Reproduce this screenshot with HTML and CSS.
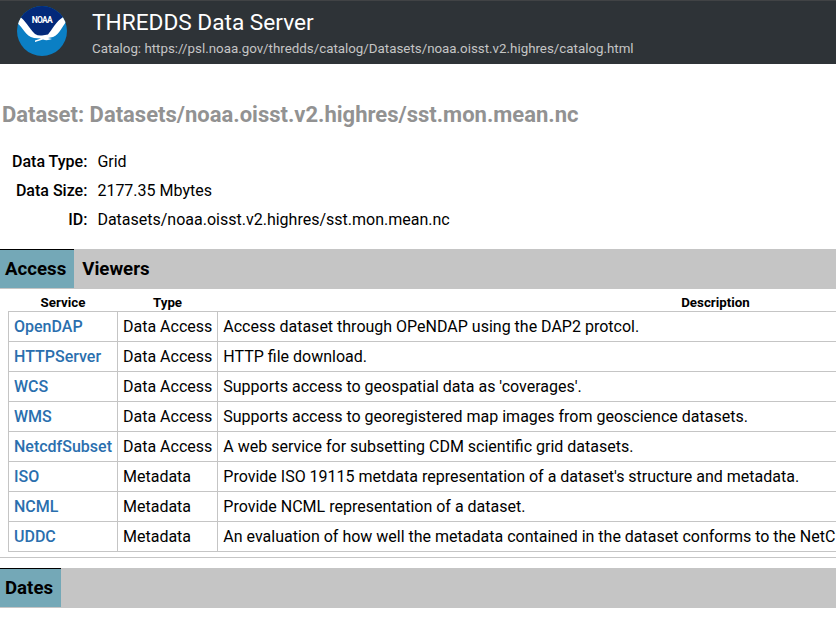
FILE: index.html
```html
<!DOCTYPE html>
<html lang="en">
<head>
<meta charset="utf-8">
<title>THREDDS Data Server</title>
<link rel="stylesheet" href="styles.css">
</head>
<body>
<header class="site-header">
  <svg class="logo" viewBox="0 0 50 50" aria-hidden="true">
    <defs><clipPath id="disc"><circle cx="25" cy="25" r="25"/></clipPath></defs>
    <g clip-path="url(#disc)">
      <rect width="50" height="50" fill="#0b7fc4"/>
      <path d="M0 0H50V11H46L34 29L26 31L18 29L3 11H0Z" fill="#03297a"/>
      <path d="M2.500 10.500C8 14 12 22 18 28Q21 30 25 29.500L31 28.500C35 24 39 15 47 10.500L50 15C45 20 43 28 36 31L31 32L35 33Q30 35 26 33.500L18 36L18 34.500L24 32.500L17 32C8 30 6 21 0 17Z" fill="#fff"/>
    </g>
    <text class="logo-text" x="25.200" y="16.500" text-anchor="middle" textLength="21" lengthAdjust="spacing">NOAA</text>
  </svg>
  <div class="titles">
    <div class="server-name">THREDDS Data Server</div>
    <div class="catalog">Catalog: https://psl.noaa.gov/thredds/catalog/Datasets/noaa.oisst.v2.highres/catalog.html</div>
  </div>
</header>
<main>
  <h3 class="dataset-title">Dataset: Datasets/noaa.oisst.v2.highres/sst.mon.mean.nc</h3>
  <dl class="info">
    <dt>Data Type:</dt><dd>Grid</dd>
    <dt>Data Size:</dt><dd>2177.35 Mbytes</dd>
    <dt>ID:</dt><dd>Datasets/noaa.oisst.v2.highres/sst.mon.mean.nc</dd>
  </dl>
  <nav class="tabs"><div class="tab active">Access</div><div class="tab">Viewers</div></nav>
  <div class="panel">
    <table class="services">
      <colgroup><col class="c-service"><col class="c-type"><col class="c-desc"></colgroup>
      <thead><tr><th>Service</th><th>Type</th><th>Description</th></tr></thead>
      <tbody>
        <tr><td><a>OpenDAP</a></td><td>Data Access</td><td>Access dataset through OPeNDAP using the DAP2 protcol.</td></tr>
        <tr><td><a>HTTPServer</a></td><td>Data Access</td><td>HTTP file download.</td></tr>
        <tr><td><a>WCS</a></td><td>Data Access</td><td>Supports access to geospatial data as 'coverages'.</td></tr>
        <tr><td><a>WMS</a></td><td>Data Access</td><td>Supports access to georegistered map images from geoscience datasets.</td></tr>
        <tr><td><a>NetcdfSubset</a></td><td>Data Access</td><td>A web service for subsetting CDM scientific grid datasets.</td></tr>
        <tr><td><a>ISO</a></td><td>Metadata</td><td>Provide ISO 19115 metdata representation of a dataset's structure and metadata.</td></tr>
        <tr><td><a>NCML</a></td><td>Metadata</td><td>Provide NCML representation of a dataset.</td></tr>
        <tr><td><a>UDDC</a></td><td>Metadata</td><td>An evaluation of how well the metadata contained in the dataset conforms to the NetC</td></tr>
      </tbody>
    </table>
  </div>
  <nav class="tabs dates"><div class="tab active">Dates</div></nav>
</main>
</body>
</html>
```
FILE: styles.css
```css
* { box-sizing: border-box; }
body {
  margin: 0;
  overflow: hidden;
  background: #fff;
  color: #000;
  font: 16px/20px Roboto, sans-serif;
}
.site-header {
  display: flex;
  height: 64px;
  padding: 6px 0 0 17px;
  background: #2e3337;
  border-top: 1px solid #414345;
}
.logo { width: 50px; height: 50px; margin-top: -1px; }
.logo-text { font: 700 8.500px Roboto, sans-serif; fill: #fff; }
.titles { margin: 1px 0 0 25px; }
.server-name { font-size: 17pt; line-height: 30px; color: #fff; }
.catalog { font-size: 10pt; line-height: 20px; margin-top: 1px; color: #c5c5c5; }
.dataset-title {
  margin: 36px 0 0 2px;
  font-size: 22px;
  line-height: 30px;
  font-weight: 700;
  color: #929292;
}
.info {
  display: grid;
  grid-template-columns: 87.400px 1fr;
  column-gap: 10px;
  grid-auto-rows: 29px;
  margin: 17px 0 15px;
  line-height: 29px;
}
.info dt { text-align: right; font-weight: 500; }
.info dd { margin: 0; }
.tabs { display: flex; height: 40px; background: #c5c5c5; }
.tab {
  height: 39px;
  padding: 0 8px;
  border-top: 1px solid transparent;
  font-size: 14pt;
  line-height: 38px;
  font-weight: 700;
}
.tab.active { padding: 0 8px 0 5px; background: #74a8b7; border-top-color: #000; }
.panel { height: 269px; padding: 5px 0 0 8px; overflow: hidden; border-bottom: 1px solid #c5c5c5; }
.services { width: 1206px; table-layout: fixed; border-collapse: collapse; }
.c-service { width: 109px; }
.c-type { width: 100px; }
.services th { height: 17px; padding: 0; font-size: 10pt; line-height: 17px; font-weight: 700; }
.services td { height: 30px; padding: 0 5px; border: 1px solid #c5c5c5; line-height: 29px; white-space: nowrap; }
.services td:last-child { padding-left: 5.300px; }
.services a { color: #2a6fae; font-weight: 500; }
.dates { margin-top: 10px; }
```
